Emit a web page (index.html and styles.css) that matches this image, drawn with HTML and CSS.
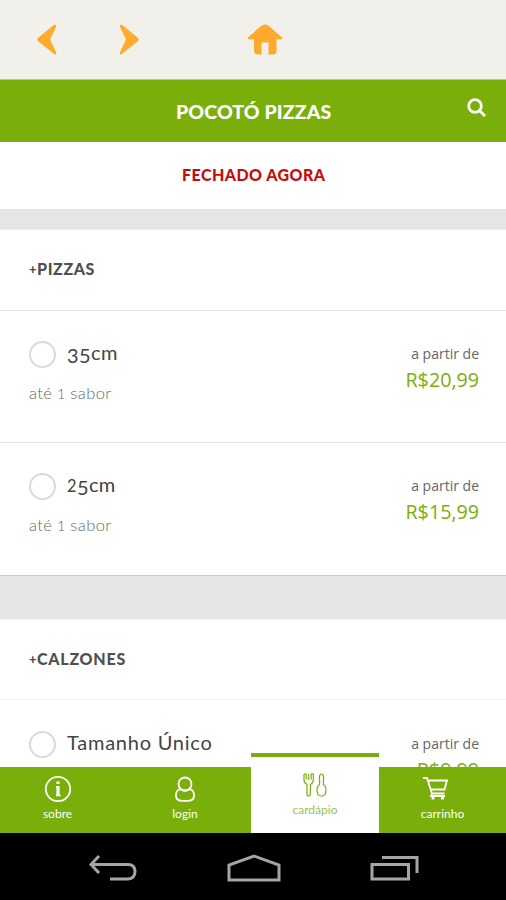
FILE: index.html
```html
<!DOCTYPE html>
<html lang="pt-BR">
<head>
<meta charset="utf-8">
<title>Pocotó Pizzas</title>
<link rel="stylesheet" href="styles.css">
</head>
<body>
<div class="app">
  <div class="toolbar">
    <svg class="tool back" width="20" height="31" viewBox="0 0 20 31"><path d="M17 .8Q20 0 19 3L13 15.500L19 28Q20 31.500 17 30L1 17Q-.7 15.500 1 14Z"/></svg>
    <svg class="tool forward" width="20" height="31" viewBox="0 0 20 31"><path d="M3 .8Q0 0 1 3L7 15.500L1 28Q0 31.500 3 30L19 17Q20.700 15.500 19 14Z"/></svg>
    <svg class="tool home" width="36" height="31" viewBox="0 0 36 31"><path d="M1 13.500L14 2Q18 -1 22 2L35 13.500Q36 15.300 34 15.300H29.500V27Q29.500 30.500 26 30.500H21.500V18.500H14.500V30.500H11Q7 30.500 7 27V15.300H2Q0 15.300 1 13.500Z"/></svg>
  </div>
  <header class="header">
    <h1 class="title">POCOTÓ PIZZAS</h1>
    <svg class="search" width="20" height="20" viewBox="0 0 20 20"><circle cx="8" cy="8" r="6.300"/><path d="M12.700 12.700L18 18"/></svg>
  </header>
  <div class="status"><span>FECHADO AGORA</span></div>
  <main class="menu">
    <section class="category">
      <h2 class="category-title"><span class="plus">+</span><span class="pizzas">PIZZAS</span></h2>
      <div class="item">
        <div class="size"><div class="choice"><i class="radio"></i><span class="name"><span class="low">35</span>cm</span></div><div class="note">até <span class="small">1</span> sabor</div></div>
        <div class="price"><div class="from">a partir de</div><div class="amount">R$20,99</div></div>
      </div>
      <div class="item">
        <div class="size"><div class="choice"><i class="radio"></i><span class="name"><span class="small">2</span><span class="low">5</span>cm</span></div><div class="note">até <span class="small">1</span> sabor</div></div>
        <div class="price"><div class="from">a partir de</div><div class="amount">R$15,99</div></div>
      </div>
    </section>
    <section class="category">
      <h2 class="category-title"><span class="plus">+</span><span class="calzones">CALZONES</span></h2>
      <div class="item">
        <div class="size"><div class="choice"><i class="radio"></i><span class="name long">Tamanho Único</span></div></div>
        <div class="price"><div class="from">a partir de</div><div class="amount">R$9,99</div></div>
      </div>
    </section>
  </main>
  <nav class="tabs">
    <div class="tab sobre">
      <svg width="28" height="28" viewBox="0 0 28 28"><circle cx="14" cy="14" r="12.200"/><path d="M14 6.500V9M14 11V21" stroke-width="3.200"/><path d="M12 12H14M12 20.300H16.500"/></svg>
      <span>sobre</span>
    </div>
    <div class="tab login">
      <svg width="28" height="28" viewBox="0 0 28 28"><circle cx="14" cy="9" r="6.500"/><path d="M9 14C3.500 16.500 3 25.800 11 25.800H17C25 25.800 24.500 16.500 19 14Q14 17.500 9 14Z"/></svg>
      <span>login</span>
    </div>
    <div class="tab active">
      <svg width="28" height="28" viewBox="0 0 28 28"><path d="M3 3V9Q3 12 6 13.500V23Q6 25 7.700 25T9.400 23V13.500Q12.300 12 12.300 9V3H10.200V8.500M3 3H5.200V8.500M7.700 3V9M20.500 3C18.500 3 18 6 18.600 10V13.500C14.800 16 15 25 20.500 25S26.200 16 22.400 13.500V10C23 6 22.500 3 20.500 3Z"/></svg>
      <span>cardápio</span>
    </div>
    <div class="tab cart">
      <svg width="28" height="28" viewBox="0 0 28 28"><path d="M1 3H5L10 18.500H22.500M6 5.500H25L22.500 14.500H9M10 18.500L9 21H23"/><path d="M11 21.500V24.500M20.500 21.500V24.500" stroke-width="2.800"/></svg>
      <span>carrinho</span>
    </div>
  </nav>
  <div class="system">
    <svg width="48" height="26" viewBox="0 0 48 26"><path d="M10 1L2 9.500L10 18M2 9.500H39Q46 9.500 46 16.500T39 24H21"/></svg>
    <svg width="54" height="28" viewBox="0 0 54 28"><path d="M2 26V11L27 2L52 11V26Z"/></svg>
    <svg width="50" height="26" viewBox="0 0 50 26"><path d="M2 9.500H38.500V24H2ZM12 2.500H47V18"/></svg>
  </div>
</div>
</body>
</html>
```
FILE: styles.css
```css
* { box-sizing: border-box; }
body { margin: 0; font-family: Lato, "Open Sans", sans-serif; background: #fff; }
h1, h2 { margin: 0; }
svg { display: block; flex: none; }
.app { display: flex; flex-direction: column; width: 506px; height: 900px; overflow: hidden; }
.toolbar { flex: none; height: 80px; background: #f1f0eb; border-bottom: 1px solid #b5d078; display: flex; padding: 24px 0 0 37px; }
.tool { fill: #fdaa2e; }
.forward { margin-left: 62px; }
.home { margin-left: 108px; }
.header { flex: none; height: 62px; background: #7aae0b; display: flex; padding: 0 19px 0 176px; justify-content: space-between; }
.title { font: 900 19.5px/63px Lato, sans-serif; color: #fff; white-space: nowrap; letter-spacing: .1px; }
.search { margin-top: 18px; fill: none; stroke: #fff; stroke-width: 2.8; }
.status { flex: none; height: 67px; padding-left: 182px; font-size: 16px; font-weight: 900; line-height: 66px; color: #c60c0c; letter-spacing: .45px; }
.menu { flex: none; height: 558px; overflow: hidden; background: #e5e5e5; padding-top: 20px; }
.category { background: #fff; border-top: 1px solid #ededed; margin-bottom: 43px; }
.category + .category { border-top-color: #f5f5f5; }
.category-title { height: 80px; padding-left: 29px; display: flex; align-items: center; font-size: 16px; font-weight: 900; color: #505050; line-height: 78px; padding-bottom: 2px; }
.plus { font-size: 13px; width: 8px; }
.pizzas { letter-spacing: .6px; }
.calzones { letter-spacing: .75px; }
.item { height: 132px; border-top: 1px solid #e5e5e5; padding: 30px 27px 0 29px; display: flex; justify-content: space-between; }
.category:first-child .item:last-child { height: 134px; border-bottom: 1px solid #cecece; }
.category:last-child .item { padding-top: 31px; border-top-color: #f2f2f2; }
.category:last-child .category-title { height: 79px; }
.choice { display: flex; }
.radio { width: 27px; height: 27px; border: 2.5px solid #d9d9d9; border-radius: 50%; }
.name { font-size: 20px; line-height: 22px; color: #444; margin-left: 11px; letter-spacing: .4px; white-space: nowrap; }
.long { letter-spacing: .75px; }
.low { display: inline-block; line-height: 20px; transform: translateY(3px); }
.small { font-size: .82em; }
.note { margin-top: 13px; font-size: 16.5px; font-weight: 300; line-height: 24px; color: #666; letter-spacing: .4px; }
.price { text-align: right; font-family: "Open Sans", sans-serif; }
.from { font-size: 14px; line-height: 26px; color: #666; }
.amount { font-size: 19.7px; line-height: 26px; color: #7aae0b; }
.tabs { flex: none; height: 66px; display: flex; position: relative; background: #7aae0b; color: #fff; }
.tab { display: flex; flex-direction: column; align-items: center; padding-top: 8px; font-size: 12px; line-height: 17px; }
.tab svg { fill: none; stroke: currentColor; stroke-width: 1.8; }
.tab span { margin-top: 2px; }
.sobre { width: 115px; }
.login { width: 136px; padding-left: 4px; }
.active { width: 128px; height: 80px; margin-top: -14px; background: #fff; border-top: 4px solid #7aae0b; color: #7aae0b; padding-top: 14px; }
.active svg { stroke-width: 1.2; }
.active span { margin-top: 2px; opacity: .75; }
.cart { width: 127px; }
.cart svg { margin-right: 14px; }
.system { flex: none; height: 67px; background: #000; display: flex; align-items: center; padding: 3px 86px 0 89px; justify-content: space-between; }
.system svg { fill: none; stroke: #a5a5a5; stroke-width: 3; }
```
